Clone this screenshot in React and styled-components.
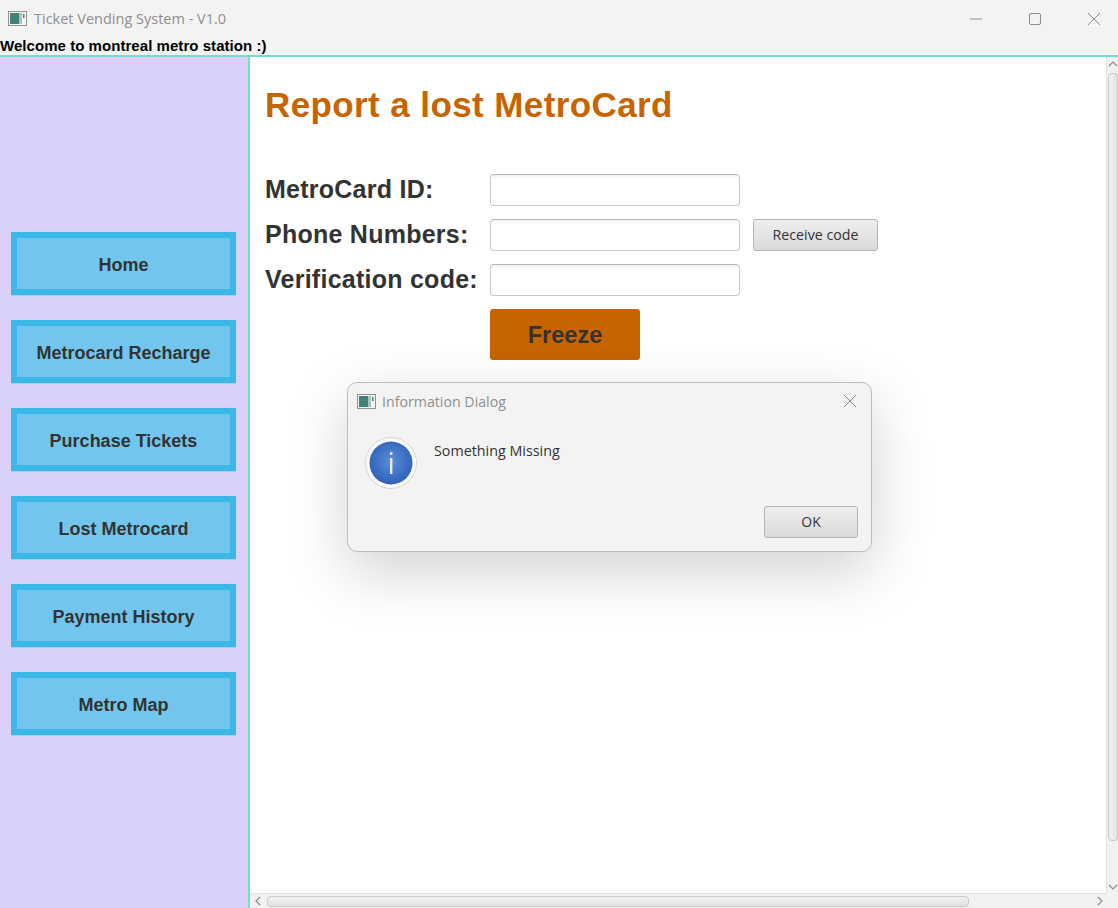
import React from "react";
import styled, { createGlobalStyle } from "styled-components";

const GlobalStyle = createGlobalStyle`
html, body {
    margin: 0;
    padding: 0;
    background: #f3f3f3;
}
`

const Win = styled.div`
width: 1118px;
height: 908px;
position: relative;
overflow: hidden;
display: flex;
flex-direction: column;
background: #f3f3f3;
`

const TitleBar = styled.div`
height: 37px;
flex: none;
display: flex;
align-items: center;
padding-left: 8px;
`

const WinTitle = styled.span`
margin-left: 7px;
font-family: "Open Sans", sans-serif;
font-size: 14.5px;
color: #8f8f8f;
`

const WinControls = styled.div`
margin-left: auto;
padding-right: 18px;
display: flex;
align-items: center;
gap: 47px;
svg { display: block; }
`

const Welcome = styled.div`
height: 18px;
flex: none;
font-family: "Liberation Sans", sans-serif;
font-weight: bold;
font-size: 15px;
letter-spacing: 0.05px;
line-height: 18px;
color: #000;
white-space: nowrap;
`

const Body = styled.div`
flex: 1;
min-height: 0;
display: flex;
border-top: 2px solid #78dccb;
`

const Sidebar = styled.nav`
width: 250px;
flex: none;
box-sizing: border-box;
background: #d9d1fa;
border-right: 2px solid #78dccb;
padding: 175px 0 0 11px;
display: flex;
flex-direction: column;
gap: 25px;
`

const NavButton = styled.div`
width: 225px;
height: 63px;
box-sizing: border-box;
padding-top: 3px;
background: #72c6ee;
border: 6px solid #3cb8e8;
box-shadow: 0 1px 0 #b0c8f4;
display: flex;
align-items: center;
justify-content: center;
font-family: "Liberation Sans", sans-serif;
font-weight: bold;
font-size: 18px;
color: #333;
white-space: nowrap;
`

const Main = styled.main`
flex: 1;
min-width: 0;
display: grid;
grid-template-columns: 1fr 12px;
grid-template-rows: 1fr 15px;
background: #fff;
`

const Content = styled.div`
padding: 27px 0 0 15px;
`

const PageTitle = styled.h1`
margin: 0 0 48px;
height: 42px;
line-height: 42px;
font-family: "Liberation Sans", sans-serif;
font-weight: bold;
font-size: 35px;
letter-spacing: 0.4px;
color: #c86400;
white-space: nowrap;
`

const Form = styled.div`
display: grid;
grid-template-columns: 225px 250px auto;
grid-auto-rows: auto;
row-gap: 13px;
align-items: center;
justify-content: start;
`

const Label = styled.label`
padding-bottom: 2px;
font-family: "Liberation Sans", sans-serif;
font-weight: bold;
font-size: 25px;
letter-spacing: 0.25px;
color: #333;
white-space: nowrap;
`

const Input = styled.input`
display: block;
width: 250px;
height: 32px;
box-sizing: border-box;
border: 1px solid #c8c8c8;
border-top-color: #b8b8b8;
border-radius: 4px;
background: linear-gradient(#f2f2f2 0, #fff 4px);
outline: none;
`

const Empty = styled.span`
display: block;
`

const ReceiveButton = styled.button`
margin-left: 13px;
width: 125px;
height: 32px;
box-sizing: border-box;
padding: 0 0 2px;
border: 1px solid #b5b5b5;
border-radius: 3px;
background: linear-gradient(#eeeeee, #dadada);
font-family: "Open Sans", sans-serif;
font-size: 14.2px;
color: #333;
`

const FreezeButton = styled.button`
grid-column: 2;
width: 150px;
height: 51px;
padding: 2px 0 0;
border: 0;
border-radius: 3px;
background: #c86400;
font-family: "Liberation Sans", sans-serif;
font-weight: bold;
font-size: 23.5px;
color: #333;
`

const VScroll = styled.div`
background: #f1f1f1;
border-left: 1px solid #e2e2e2;
display: flex;
flex-direction: column;
align-items: center;
padding-top: 1px;
box-sizing: border-box;
`

const VThumb = styled.div`
margin: 3px 0 40px;
width: 10px;
flex: 1;
box-sizing: border-box;
border: 1px solid #c9c9c9;
border-radius: 4px;
background: linear-gradient(90deg, #f2f2f2, #e2e2e2);
`

const HScroll = styled.div`
background: #f1f1f1;
border-top: 1px solid #e2e2e2;
display: flex;
align-items: center;
padding-left: 2px;
box-sizing: border-box;
`

const HThumb = styled.div`
margin-left: 3px;
width: 702px;
height: 11px;
box-sizing: border-box;
border: 1px solid #c9c9c9;
border-radius: 4px;
background: linear-gradient(#f2f2f2, #e2e2e2);
`

const ScrollEnd = styled.div`
margin-left: auto;
line-height: 0;
`

const Corner = styled.div`
background: #f1f1f1;
`

const Dialog = styled.div`
position: absolute;
left: 347px;
top: 382px;
width: 525px;
height: 170px;
box-sizing: border-box;
border: 1px solid #bdbdbd;
border-radius: 10px;
background: #f3f3f3;
box-shadow: 0 20px 60px rgba(0, 0, 0, 0.18);
display: flex;
flex-direction: column;
`

const DialogHead = styled.div`
height: 36px;
flex: none;
display: flex;
align-items: center;
padding: 0 14px 0 9px;
`

const DialogTitle = styled.span`
margin-left: 6px;
font-family: "Open Sans", sans-serif;
font-size: 14.2px;
color: #8f8f8f;
`

const DialogClose = styled.div`
margin-left: auto;
line-height: 0;
`

const DialogBody = styled.div`
display: flex;
padding: 18px 0 0 17px;
flex: 1;
`

const Message = styled.div`
margin: 4px 0 0 17px;
font-family: "Open Sans", sans-serif;
font-size: 14.3px;
line-height: 20px;
color: #333;
`

const DialogFoot = styled.div`
display: flex;
justify-content: flex-end;
padding: 0 13px 13px 0;
`

const OkButton = styled.button`
width: 94px;
height: 32px;
box-sizing: border-box;
padding: 0 0 2px;
border: 1px solid #b5b5b5;
border-radius: 3px;
background: linear-gradient(#eeeeee, #dadada);
font-family: "Open Sans", sans-serif;
font-size: 14px;
color: #333;
`

const AppIcon = () => (
    <svg width="19" height="15" viewBox="0 0 19 15">
        <rect x="0.5" y="0.5" width="18" height="14" fill="#f4f6f6" stroke="#8d9494" />
        <rect x="2" y="2" width="9" height="11" fill="#3f8378" />
        <rect x="11" y="2" width="3" height="11" fill="#a9c4c0" />
        <rect x="15" y="3" width="1.5" height="4" fill="#4c7f7a" />
    </svg>
)

const InfoIcon = () => (
    <svg width="52" height="52" viewBox="0 0 52 52">
        <defs>
            <radialGradient id="infoFill" cx="50%" cy="45%" r="55%">
                <stop offset="0%" stopColor="#5a8ddb" />
                <stop offset="100%" stopColor="#2f62b8" />
            </radialGradient>
        </defs>
        <circle cx="26" cy="26" r="25.5" fill="#fafafa" stroke="#d6d6d6" />
        <circle cx="26" cy="26" r="21.5" fill="url(#infoFill)" />
        <rect x="25" y="21" width="2.4" height="16" fill="#e6eefa" />
        <rect x="25" y="15" width="2.4" height="3" fill="#e6eefa" />
    </svg>
)

const Chevron = ({ d }) => (
    <svg width="12" height="12" viewBox="0 0 12 12">
        <path d={d} fill="none" stroke="#8c8c8c" strokeWidth="1.2" />
    </svg>
)

const navItems = ["Home", "Metrocard Recharge", "Purchase Tickets", "Lost Metrocard", "Payment History", "Metro Map"]

const App = () => {
    return (
        <Win>
            <GlobalStyle />
            <TitleBar>
                <AppIcon />
                <WinTitle>Ticket Vending System - V1.0</WinTitle>
                <WinControls>
                    <svg width="12" height="12" viewBox="0 0 12 12"><path d="M0 6h12" stroke="#8c8c8c" /></svg>
                    <svg width="12" height="12" viewBox="0 0 12 12"><rect x="0.5" y="0.5" width="11" height="11" rx="1.5" fill="none" stroke="#8c8c8c" /></svg>
                    <svg width="12" height="12" viewBox="0 0 12 12"><path d="M0 0l12 12M12 0L0 12" stroke="#8c8c8c" /></svg>
                </WinControls>
            </TitleBar>
            <Welcome>Welcome to montreal metro station :)</Welcome>
            <Body>
                <Sidebar>
                    {navItems.map(item => <NavButton key={item}>{item}</NavButton>)}
                </Sidebar>
                <Main>
                    <Content>
                        <PageTitle>Report a lost MetroCard</PageTitle>
                        <Form>
                            <Label>MetroCard ID:</Label>
                            <Input />
                            <Empty />
                            <Label>Phone Numbers:</Label>
                            <Input />
                            <ReceiveButton>Receive code</ReceiveButton>
                            <Label>Verification code:</Label>
                            <Input />
                            <Empty />
                            <FreezeButton>Freeze</FreezeButton>
                        </Form>
                    </Content>
                    <VScroll>
                        <Chevron d="M2 8l4-4 4 4" />
                        <VThumb />
                        <Chevron d="M2 4l4 4 4-4" />
                    </VScroll>
                    <HScroll>
                        <Chevron d="M8 2L4 6l4 4" />
                        <HThumb />
                        <ScrollEnd><Chevron d="M4 2l4 4-4 4" /></ScrollEnd>
                    </HScroll>
                    <Corner />
                </Main>
            </Body>
            <Dialog>
                <DialogHead>
                    <AppIcon />
                    <DialogTitle>Information Dialog</DialogTitle>
                    <DialogClose>
                        <svg width="14" height="14" viewBox="0 0 14 14"><path d="M1 1l12 12M13 1L1 13" stroke="#8c8c8c" /></svg>
                    </DialogClose>
                </DialogHead>
                <DialogBody>
                    <InfoIcon />
                    <Message>Something Missing</Message>
                </DialogBody>
                <DialogFoot>
                    <OkButton>OK</OkButton>
                </DialogFoot>
            </Dialog>
        </Win>
    )
}

export default App;
